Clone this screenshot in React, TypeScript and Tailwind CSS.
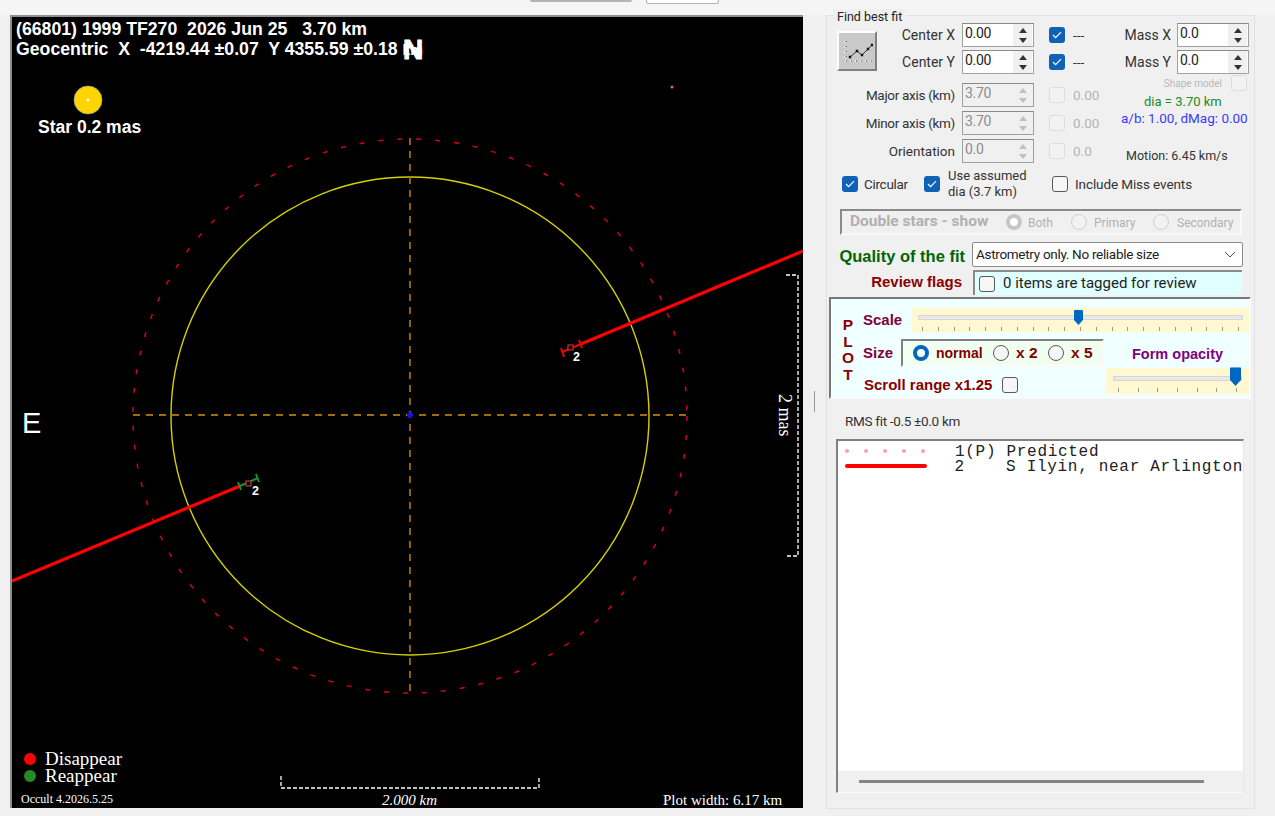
import React from 'react';

const Check = () => (
  <svg width="10" height="8" viewBox="0 0 10 8" fill="none">
    <path d="M1 4l2.6 2.6L9 1.2" stroke="#fff" strokeWidth="1.2" />
  </svg>
);

const CheckBox = ({ state = 'off' }: { state?: 'on' | 'off' | 'disabled' }) => {
  if (state === 'on') {
    return (
      <span className="flex h-[16px] w-[16px] shrink-0 items-center justify-center rounded-[3px] bg-[#0f62b5]">
        <Check />
      </span>
    );
  }
  if (state === 'disabled') {
    return <span className="block h-[16px] w-[16px] shrink-0 rounded-[3px] border border-[#dcdcdc] bg-[#f2f2f2]" />;
  }
  return <span className="block h-[16px] w-[16px] shrink-0 rounded-[3px] border border-[#5a5a5a] bg-[#f6f6f6]" />;
};

const Radio = ({ state = 'off' }: { state?: 'on' | 'off' | 'grey' | 'faint' }) => {
  if (state === 'on') {
    return <span className="block h-[16px] w-[16px] shrink-0 rounded-full border-[4.5px] border-[#0067c0] bg-white" />;
  }
  if (state === 'grey') {
    return <span className="block h-[16px] w-[16px] shrink-0 rounded-full border-[4.5px] border-[#c6c6c6] bg-white" />;
  }
  if (state === 'faint') {
    return <span className="block h-[16px] w-[16px] shrink-0 rounded-full border border-[#d0d0d0] bg-[#f2f2f2]" />;
  }
  return <span className="block h-[16px] w-[16px] shrink-0 rounded-full border border-[#5a5a5a] bg-[#f6f6f6]" />;
};

const Spin = ({ value, disabled = false }: { value: string; disabled?: boolean }) => (
  <div
    className={`flex h-[24px] w-[72px] shrink-0 items-center justify-between border border-[#a0a0a0] border-t-[#8a8a8a] pl-[2px] pr-[1px] text-[14px] tracking-[-0.3px] ${
      disabled ? 'bg-[#f0f0f0] text-[#8c8c8c]' : 'bg-white text-[#222]'
    }`}
  >
    <span className="-mt-[3px]">{value}</span>
    <span className="flex h-[22px] w-[19px] flex-col items-center justify-center gap-[5px] bg-[#f0f0f0]">
      <svg width="8" height="5" viewBox="0 0 8 5">
        <path d="M4 0l4 5H0z" fill={disabled ? '#c0c0c0' : '#333'} />
      </svg>
      <svg width="8" height="5" viewBox="0 0 8 5">
        <path d="M4 5L0 0h8z" fill={disabled ? '#c0c0c0' : '#333'} />
      </svg>
    </span>
  </div>
);

const AxisRow = ({
  label,
  value,
  labelClass,
  check,
  note,
  disabled = false,
}: {
  label: string;
  value: string;
  labelClass: string;
  check: 'on' | 'disabled';
  note: string;
  disabled?: boolean;
}) => (
  <div className="flex h-[24px] items-center">
    <span className={`${labelClass} shrink-0 pr-[7px] text-right text-[#333]`}>{label}</span>
    <Spin value={value} disabled={disabled} />
    <span className="ml-[15px]">
      <CheckBox state={check} />
    </span>
    <span className={`ml-[8px] ${disabled ? 'text-[#b4b4b4]' : 'text-[#333]'}`}>{note}</span>
  </div>
);

const Ticks = ({ count }: { count: number }) => (
  <div className="flex justify-between">
    {Array.from({ length: count }).map((_, i) => (
      <span key={i} className="block h-[4px] w-[1px] bg-[#9a9a9a]" />
    ))}
  </div>
);

const Thumb = () => (
  <svg width="9" height="15" viewBox="0 0 9 15">
    <path d="M1 0h7a1 1 0 0 1 1 1v9l-4.5 5L0 10V1a1 1 0 0 1 1-1z" fill="#0067c0" />
  </svg>
);

const PlotCanvas = () => (
  <div className="relative h-[793px] w-[793px] shrink-0 overflow-hidden border-l-2 border-t-2 border-[#8e8e8e] bg-black font-['Liberation_Sans',sans-serif] text-white">
    <svg className="absolute inset-0" width="791" height="791" viewBox="12 17 791 791" fill="none">
      <circle cx="672" cy="87" r="1.5" fill="#d06a8a" />
      <circle cx="410" cy="416" r="277" stroke="#d40018" strokeWidth="1.5" strokeDasharray="5 14" />
      <circle cx="410" cy="416" r="239" stroke="#d6d000" strokeWidth="1.4" />
      <path d="M133 415H687" stroke="#a06c0c" strokeWidth="1.8" strokeDasharray="7 6" />
      <path d="M410 138V693" stroke="#a06c0c" strokeWidth="1.8" strokeDasharray="7 6" />
      <circle cx="410" cy="415" r="3" fill="#1414d8" />

      <path d="M803 251L581 344" stroke="#ff0000" strokeWidth="3.2" />
      <path d="M581 344L562 352" stroke="#f00000" strokeWidth="2.2" />
      <path d="M579 340l3 8M561 348l3 9" stroke="#f00000" strokeWidth="2" />
      <rect x="568" y="345" width="5" height="5" fill="#000" stroke="#c83030" strokeWidth="1.2" />

      <path d="M12 581L240 486" stroke="#ff0000" strokeWidth="3.2" />
      <path d="M240 486L258 478" stroke="#1e8f2c" strokeWidth="2.2" />
      <path d="M238 482l3 8M256 474l3 8" stroke="#1e8f2c" strokeWidth="2" />
      <rect x="246" y="481" width="5" height="5" fill="#000" stroke="#b04030" strokeWidth="1.2" />

      <path d="M786 275H798V556H786" stroke="#fff" strokeWidth="1.3" strokeDasharray="4 2" />
      <path d="M281 776V788H539V776" stroke="#fff" strokeWidth="1.3" strokeDasharray="4 2" />

      <circle cx="88" cy="100" r="14" fill="#ffd500" stroke="#9a9a80" strokeWidth="0.8" />
      <circle cx="88" cy="100" r="1.5" fill="#fff" />
      <circle cx="30" cy="759" r="6" fill="#ff0000" />
      <circle cx="30" cy="776" r="6" fill="#228b22" />
    </svg>

    <div className="absolute left-[4px] top-[2px] whitespace-pre text-[17.7px] font-bold leading-[20px]">
      <div>(66801) 1999 TF270  2026 Jun 25   3.70 km</div>
      <div>
        Geocentric  X  -4219.44 ±0.07  Y 4355.59 ±0.18 <span className="text-[14px]">km</span>
      </div>
    </div>
    <span className="absolute left-[391px] top-[18px] text-[28px] font-bold leading-[30px] [-webkit-text-stroke:1px_white]">N</span>
    <span className="absolute left-[26px] top-[100px] text-[17.5px] font-bold leading-[20px]">Star 0.2 mas</span>
    <span className="absolute left-[10px] top-[388px] text-[29px] leading-[36px]">E</span>
    <span className="absolute left-[240px] top-[467px] text-[12.5px] font-bold leading-[14px]">2</span>
    <span className="absolute left-[561px] top-[333px] text-[12.5px] font-bold leading-[14px]">2</span>
    <span className="absolute left-[763px] top-[377px] font-['Liberation_Serif',serif] text-[18px] leading-[20px] [writing-mode:vertical-rl]">
      2 mas
    </span>
    <div className="absolute bottom-0 left-0 right-0 font-['Liberation_Serif',serif]">
      <span className="absolute left-[33px] top-[-57px] text-[19px] leading-[16px]">Disappear</span>
      <span className="absolute left-[33px] top-[-40px] text-[19px] leading-[16px]">Reappear</span>
      <span className="absolute left-[9px] top-[-16px] text-[12px] leading-[14px]">Occult 4.2026.5.25</span>
      <span className="absolute left-[370px] top-[-16px] text-[15px] italic leading-[16px]">2.000 km</span>
      <span className="absolute left-[651px] top-[-16px] whitespace-nowrap text-[15px] leading-[16px]">Plot width: 6.17 km</span>
    </div>
  </div>
);

const FitButton = () => (
  <div className="flex h-[40px] w-[40px] shrink-0 items-center justify-center border-2 border-b-[#808080] border-l-white border-r-[#808080] border-t-white bg-[#c9c9c9]">
    <svg width="32" height="28" viewBox="0 0 32 28" fill="none">
      <path d="M4 4v20M4 24h28" stroke="#fff" strokeWidth="1.6" strokeDasharray="1.6 3.4" />
      <path d="M5 4v20M5 24h26" stroke="#333" strokeWidth="1" strokeDasharray="1 4" />
      <path d="M9 20l7-6 5 4 6-6 4-4" stroke="#333" strokeWidth="1" />
      <path d="M9 20h.01M16 14h.01M21 18h.01M27 12h.01M31 8h.01" stroke="#111" strokeWidth="2.4" strokeLinecap="square" />
    </svg>
  </div>
);

const FitPanel = () => (
  <div className="relative h-[794px] w-[429px] shrink-0 border border-[#e2e2e2] pl-[9px] pt-[7px] font-['Roboto',sans-serif] text-[13.5px]">
    <span className="absolute -top-[7px] left-[6px] bg-[#f0f0f0] px-[4px] text-[12.5px] leading-[16px] text-[#222]">Find best fit</span>

    <div className="flex">
      <div className="w-[264px] shrink-0">
        <div className="flex">
          <div className="pl-[1px] pt-[8px]">
            <FitButton />
          </div>
          <div className="flex flex-col gap-[3px]">
            <AxisRow label="Center X" value="0.00" labelClass="w-[85px] text-[14px]" check="on" note="---" />
            <AxisRow label="Center Y" value="0.00" labelClass="w-[85px] text-[14px]" check="on" note="---" />
          </div>
        </div>
        <div className="mt-[9px] flex flex-col gap-[4px]">
          <AxisRow label="Major axis (km)" value="3.70" labelClass="w-[126px] tracking-[-0.3px]" check="disabled" note="0.00" disabled />
          <AxisRow label="Minor axis (km)" value="3.70" labelClass="w-[126px] tracking-[-0.3px]" check="disabled" note="0.00" disabled />
          <AxisRow label="Orientation" value="0.0" labelClass="w-[126px]" check="disabled" note="0.0" disabled />
        </div>
      </div>

      <div className="flex w-[150px] flex-col">
        <div className="flex flex-col gap-[3px] text-[14px] text-[#333]">
          <div className="flex h-[24px] items-center justify-end gap-[6px] pr-[1px]">
            <span>Mass X</span>
            <Spin value="0.0" />
          </div>
          <div className="flex h-[24px] items-center justify-end gap-[6px] pr-[1px]">
            <span>Mass Y</span>
            <Spin value="0.0" />
          </div>
        </div>
        <div className="mt-[1px] flex h-[16px] items-center justify-end gap-[9px] pr-[3px] text-[10px] text-[#b8b8b8]">
          <span>Shape model</span>
          <CheckBox state="disabled" />
        </div>
        <div className="mt-[2px] h-[17px] pl-[44px] text-[13px] leading-[17px] text-[#228b22]">dia = 3.70 km</div>
        <div className="h-[17px] whitespace-nowrap pl-[21px] text-[13.5px] leading-[17px] text-[#3a3aff]">a/b: 1.00, dMag: 0.00</div>
        <div className="mt-[20px] pl-[26px] text-[12.5px] leading-[18px] text-[#333]">Motion: 6.45 km/s</div>
      </div>
    </div>

    <div className="mt-[4px] flex h-[30px] items-center pl-[6px] text-[#333]">
      <div className="flex w-[82px] items-center gap-[6px]">
        <CheckBox state="on" />
        <span className="tracking-[-0.3px]">Circular</span>
      </div>
      <div className="flex w-[128px] items-center gap-[8px]">
        <CheckBox state="on" />
        <span className="text-[13px] leading-[16px]">
          Use assumed
          <br />
          dia (3.7 km)
        </span>
      </div>
      <div className="flex items-center gap-[7px]">
        <CheckBox />
        <span className="tracking-[-0.1px]">Include Miss events</span>
      </div>
    </div>

    <div className="ml-[4px] mt-[10px] flex h-[26px] w-[402px] items-center border-2 border-b-[#fafafa] border-l-[#8a8a8a] border-r-[#fafafa] border-t-[#8a8a8a] pl-[8px] text-[#b0b0b0]">
      <span className="w-[156px] whitespace-nowrap text-[15.5px] font-bold">Double stars - show</span>
      <Radio state="grey" />
      <span className="ml-[6px] w-[43px] pt-[2px] text-[12px]">Both</span>
      <Radio state="faint" />
      <span className="ml-[7px] w-[59px] pt-[2px] text-[12px]">Primary</span>
      <Radio state="faint" />
      <span className="ml-[8px] pt-[2px] text-[12px]">Secondary</span>
    </div>

    <div className="mt-[7px] flex h-[25px] items-center">
      <span className="w-[129px] whitespace-nowrap pt-[4px] text-right font-['Liberation_Sans',sans-serif] text-[16.5px] font-bold text-[#006400]">Quality of the fit</span>
      <div className="ml-[7px] flex h-[25px] w-[271px] items-center justify-between rounded-[2px] border border-[#8a8a8a] bg-white pl-[3px] pr-[6px] tracking-[-0.3px] text-[#222]">
        <span>Astrometry only. No reliable size</span>
        <svg width="12" height="7" viewBox="0 0 12 7" fill="none">
          <path d="M1 1l5 5 5-5" stroke="#555" strokeWidth="1" />
        </svg>
      </div>
    </div>

    <div className="mt-[3px] flex h-[25px] items-center">
      <span className="w-[126px] text-right font-['Liberation_Sans',sans-serif] text-[15px] font-bold text-[#8b0000]">Review flags</span>
      <div className="ml-[11px] flex h-[25px] w-[269px] items-center gap-[8px] border-l-2 border-t-2 border-l-[#8a8a8a] border-t-[#8a8a8a] bg-[#e0ffff] pl-[4px] text-[15px] text-[#222]">
        <CheckBox />
        <span>0 items are tagged for review</span>
      </div>
    </div>

    <div className="-ml-[7px] mt-[2px] flex h-[102px] w-[422px] border-2 border-b-[#fafafa] border-l-[#777] border-r-[#fafafa] border-t-[#777] bg-[#f0ffff] font-['Liberation_Sans',sans-serif] font-bold">
      <div className="flex w-[32px] shrink-0 flex-col items-center pl-[2px] pt-[18px] text-[15.5px] leading-[16.5px] text-[#8b0000]">
        <span>P</span>
        <span>L</span>
        <span>O</span>
        <span>T</span>
      </div>
      <div className="flex-1">
        <div className="mt-[9px] flex h-[24px]">
          <span className="w-[49px] pt-[3px] text-[15px] leading-[18px] text-[#800040]">Scale</span>
          <div className="relative h-[24px] flex-1 bg-[#fff8d0] px-[10px] pt-[7px]">
            <div className="mx-[-4px] h-[5px] border border-[#d6d6d6] bg-[#e8e8e8]" />
            <div className="mt-[7px]">
              <Ticks count={21} />
            </div>
            <div className="absolute left-[162px] top-[2px]">
              <Thumb />
            </div>
          </div>
        </div>
        <div className="flex">
          <div className="w-[243px] shrink-0">
            <div className="mt-[7px] flex h-[28px] items-center">
              <span className="w-[38px] text-[15px] text-[#800040]">Size</span>
              <div className="flex h-[28px] w-[203px] items-center border-2 border-b-[#fafafa] border-l-[#808080] border-r-[#fafafa] border-t-[#808080] bg-[#f0fff0] pl-[10px] text-[#800000]">
                <Radio state="on" />
                <span className="ml-[7px] w-[57px] text-[14px]">normal</span>
                <Radio />
                <span className="ml-[7px] w-[32px] text-[15.5px]">x 2</span>
                <Radio />
                <span className="ml-[7px] text-[15.5px]">x 5</span>
              </div>
            </div>
            <div className="mt-[9px] flex items-center gap-[10px] pl-[1px]">
              <span className="text-[15px] leading-[18px] text-[#8b0000]">Scroll range x1.25</span>
              <CheckBox />
            </div>
          </div>
          <div className="flex-1">
            <div className="mt-[12px] h-[24px] pl-[26px] text-[14.5px] leading-[20px] text-[#800080]">Form opacity</div>
            <div className="relative h-[26px] bg-[#fff8d0] px-[12px] pt-[8px]">
              <div className="mx-[-5px] h-[5px] border border-[#d6d6d6] bg-[#e8e8e8]" />
              <div className="mt-[7px]">
                <Ticks count={7} />
              </div>
              <div className="absolute right-[9px] top-[1px] scale-125">
                <Thumb />
              </div>
            </div>
          </div>
        </div>
      </div>
    </div>

    <div className="mt-[12px] h-[20px] pl-[9px] text-[13.5px] leading-[20px] tracking-[-0.3px] text-[#333]">RMS fit -0.5 ±0.0 km</div>

    <div className="mt-[8px] flex h-[354px] w-[408px] flex-col overflow-hidden border-b border-l-2 border-r border-t-2 border-b-[#fbfbfb] border-l-[#808080] border-r-[#e8e8e8] border-t-[#808080]">
      <div className="flex-1 bg-white pl-[7px] pt-[2px]">
        <div className="flex h-[15px] items-center">
          <div className="flex w-[82px] items-center gap-[15px]">
            {[0, 1, 2, 3, 4].map((i) => (
              <span key={i} className="block h-[4px] w-[4px] rounded-full bg-[#ff99cc]" />
            ))}
          </div>
          <span className="ml-[28px] whitespace-pre pt-[4px] font-['Liberation_Mono',monospace] text-[16px] leading-[13px] tracking-[0.7px] text-[#222]">1(P) Predicted</span>
        </div>
        <div className="flex h-[15px] items-center">
          <span className="block h-[4px] w-[82px] rounded-full bg-[#ff0000]" />
          <span className="ml-[28px] whitespace-pre pt-[4px] font-['Liberation_Mono',monospace] text-[16px] leading-[13px] tracking-[0.7px] text-[#222]">2    S Ilyin, near Arlington</span>
        </div>
      </div>
      <div className="flex h-[21px] shrink-0 items-center bg-[#f0f0f0] pl-[21px]">
        <span className="block h-[3px] w-[345px] bg-[#858585]" />
      </div>
    </div>
  </div>
);

export default function App() {
  return (
    <div className="flex h-[816px] w-[1275px] flex-col overflow-hidden bg-[#f0f0f0]">
      <div className="flex h-[15px] shrink-0 items-start bg-[#f5f5f5] pl-[530px]">
        <span className="block h-[2px] w-[102px] rounded-b-[3px] bg-[#b4b4b4]" />
        <span className="ml-[14px] block h-[4px] w-[73px] rounded-b-[3px] border border-t-0 border-[#b4b4b4] bg-white" />
      </div>
      <div className="flex pl-[10px]">
        <PlotCanvas />
        <div className="flex w-[23px] shrink-0 items-center justify-center pb-[21px]">
          <span className="block h-[21px] w-[1px] bg-[#9a9a9a]" />
        </div>
        <FitPanel />
      </div>
    </div>
  );
}
